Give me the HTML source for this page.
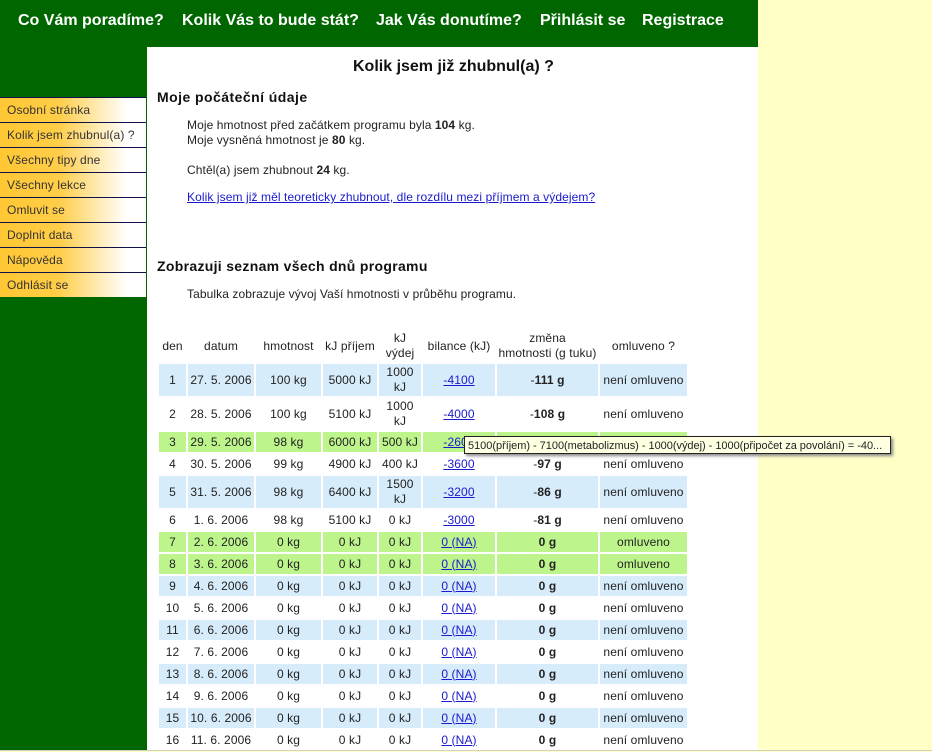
<!DOCTYPE html>
<html lang="cs"><head><meta charset="utf-8"><title>Kolik jsem již zhubnul(a) ?</title>
<style>
html,body{margin:0;padding:0}
body{width:932px;height:751px;overflow:hidden;position:relative;background:#ffffc6;font-family:"Liberation Sans",Arial,sans-serif;font-size:12px;color:#222}
.a{position:absolute;white-space:nowrap}
#top{left:0;top:0;width:758px;height:47px;background:#006600}
#side{left:0;top:47px;width:147px;height:704px;background:#006600}
#main{left:147px;top:47px;width:611px;height:704px;background:#fff}
#line{left:0;top:750px;width:932px;height:1px;background:#cfcfc4}
.n{top:11px;font-size:16px;line-height:20px;font-weight:bold;color:#fff}
.m{left:0;width:139px;height:24px;padding-left:7px;border-top:1px solid #10104a;line-height:24px;color:#333;letter-spacing:.13px;background:linear-gradient(90deg,#ffc733 0,#ffcd48 40%,#fff 87%)}
.p{letter-spacing:.09px;line-height:15px}
h1,h2{margin:0;position:absolute;white-space:nowrap;color:#111}
h1{font-size:16px;line-height:20px;left:353px;top:57px}
h2{font-size:14px;line-height:18px;left:157px}
a{color:#1a1acc;text-decoration:underline}
table{position:absolute;left:157px;top:327px;border-collapse:separate;border-spacing:2px;table-layout:fixed;width:532px}
td,th{padding:0;text-align:center;font-weight:normal;font-size:12px;line-height:15px;height:20px;color:#222;letter-spacing:.11px}
tr.h th{height:33px}
tr.h th.s{height:32px;padding-top:1px}
tr.t td{height:32px}
.b td{background:#d7ecfb}
.g td{background:#bdf58c}
#tip{left:464px;top:436px;width:427px;height:18px;line-height:17px;padding-top:1px;box-sizing:border-box;border:1px solid #222;background:#ffffe1;padding-left:3px;box-shadow:2px 2px 3px #888;color:#222;overflow:hidden;font-size:11px;letter-spacing:-.03px}
</style></head><body>
<div class="a" id="top"></div><div class="a" id="side"></div><div class="a" id="main"></div>
<span class="a n" style="left:18px">Co Vám poradíme?</span>
<span class="a n" style="left:182px">Kolik Vás to bude stát?</span>
<span class="a n" style="left:376px">Jak Vás donutíme?</span>
<span class="a n" style="left:540px">Přihlásit se</span>
<span class="a n" style="left:642px">Registrace</span>
<div class="a m" style="top:97px">Osobní stránka</div>
<div class="a m" style="top:122px">Kolik jsem zhubnul(a) ?</div>
<div class="a m" style="top:147px">Všechny tipy dne</div>
<div class="a m" style="top:172px">Všechny lekce</div>
<div class="a m" style="top:197px">Omluvit se</div>
<div class="a m" style="top:222px">Doplnit data</div>
<div class="a m" style="top:247px">Nápověda</div>
<div class="a m" style="top:272px">Odhlásit se</div>
<h1>Kolik jsem již zhubnul(a) ?</h1>
<h2 style="top:88px;letter-spacing:.45px">Moje počáteční údaje</h2>
<div class="a p" style="left:187px;top:118px">Moje hmotnost před začátkem programu byla <b>104</b> kg.<br>Moje vysněná hmotnost je <b>80</b> kg.</div>
<div class="a p" style="left:187px;top:163px">Chtěl(a) jsem zhubnout <b>24</b> kg.</div>
<div class="a p" style="left:187px;top:190px"><a href="#">Kolik jsem již měl teoreticky zhubnout, dle rozdílu mezi příjmem a výdejem?</a></div>
<h2 style="top:257px;letter-spacing:.31px">Zobrazuji seznam všech dnů programu</h2>
<div class="a p" style="left:187px;top:287px">Tabulka zobrazuje vývoj Vaší hmotnosti v průběhu programu.</div>
<table>
<colgroup><col style="width:27px"><col style="width:66px"><col style="width:65px"><col style="width:54px"><col style="width:42px"><col style="width:72px"><col style="width:101px"><col style="width:87px"></colgroup>
<tr class="h"><th class="s">den</th><th class="s">datum</th><th class="s">hmotnost</th><th class="s">kJ příjem</th><th>kJ<br>výdej</th><th class="s">bilance (kJ)</th><th>změna<br>hmotnosti (g tuku)</th><th class="s">omluveno ?</th></tr>
<tr class="b t"><td>1</td><td>27. 5. 2006</td><td>100 kg</td><td>5000 kJ</td><td>1000<br>kJ</td><td><a href="#">-4100</a></td><td>-<b>111 g</b></td><td>není omluveno</td></tr>
<tr class="t"><td>2</td><td>28. 5. 2006</td><td>100 kg</td><td>5100 kJ</td><td>1000<br>kJ</td><td><a href="#">-4000</a></td><td>-<b>108 g</b></td><td>není omluveno</td></tr>
<tr class="g"><td>3</td><td>29. 5. 2006</td><td>98 kg</td><td>6000 kJ</td><td>500 kJ</td><td><a href="#">-2600</a></td><td>-<b>70 g</b></td><td>omluveno</td></tr>
<tr><td>4</td><td>30. 5. 2006</td><td>99 kg</td><td>4900 kJ</td><td>400 kJ</td><td><a href="#">-3600</a></td><td>-<b>97 g</b></td><td>není omluveno</td></tr>
<tr class="b t"><td>5</td><td>31. 5. 2006</td><td>98 kg</td><td>6400 kJ</td><td>1500<br>kJ</td><td><a href="#">-3200</a></td><td>-<b>86 g</b></td><td>není omluveno</td></tr>
<tr><td>6</td><td>1. 6. 2006</td><td>98 kg</td><td>5100 kJ</td><td>0 kJ</td><td><a href="#">-3000</a></td><td>-<b>81 g</b></td><td>není omluveno</td></tr>
<tr class="g"><td>7</td><td>2. 6. 2006</td><td>0 kg</td><td>0 kJ</td><td>0 kJ</td><td><a href="#">0 (NA)</a></td><td><b>0 g</b></td><td>omluveno</td></tr>
<tr class="g"><td>8</td><td>3. 6. 2006</td><td>0 kg</td><td>0 kJ</td><td>0 kJ</td><td><a href="#">0 (NA)</a></td><td><b>0 g</b></td><td>omluveno</td></tr>
<tr class="b"><td>9</td><td>4. 6. 2006</td><td>0 kg</td><td>0 kJ</td><td>0 kJ</td><td><a href="#">0 (NA)</a></td><td><b>0 g</b></td><td>není omluveno</td></tr>
<tr><td>10</td><td>5. 6. 2006</td><td>0 kg</td><td>0 kJ</td><td>0 kJ</td><td><a href="#">0 (NA)</a></td><td><b>0 g</b></td><td>není omluveno</td></tr>
<tr class="b"><td>11</td><td>6. 6. 2006</td><td>0 kg</td><td>0 kJ</td><td>0 kJ</td><td><a href="#">0 (NA)</a></td><td><b>0 g</b></td><td>není omluveno</td></tr>
<tr><td>12</td><td>7. 6. 2006</td><td>0 kg</td><td>0 kJ</td><td>0 kJ</td><td><a href="#">0 (NA)</a></td><td><b>0 g</b></td><td>není omluveno</td></tr>
<tr class="b"><td>13</td><td>8. 6. 2006</td><td>0 kg</td><td>0 kJ</td><td>0 kJ</td><td><a href="#">0 (NA)</a></td><td><b>0 g</b></td><td>není omluveno</td></tr>
<tr><td>14</td><td>9. 6. 2006</td><td>0 kg</td><td>0 kJ</td><td>0 kJ</td><td><a href="#">0 (NA)</a></td><td><b>0 g</b></td><td>není omluveno</td></tr>
<tr class="b"><td>15</td><td>10. 6. 2006</td><td>0 kg</td><td>0 kJ</td><td>0 kJ</td><td><a href="#">0 (NA)</a></td><td><b>0 g</b></td><td>není omluveno</td></tr>
<tr><td>16</td><td>11. 6. 2006</td><td>0 kg</td><td>0 kJ</td><td>0 kJ</td><td><a href="#">0 (NA)</a></td><td><b>0 g</b></td><td>není omluveno</td></tr>
</table>
<div class="a" id="tip">5100(příjem) - 7100(metabolizmus) - 1000(výdej) - 1000(připočet za povolání) = -40...</div>
<div class="a" id="line"></div>
</body></html>
